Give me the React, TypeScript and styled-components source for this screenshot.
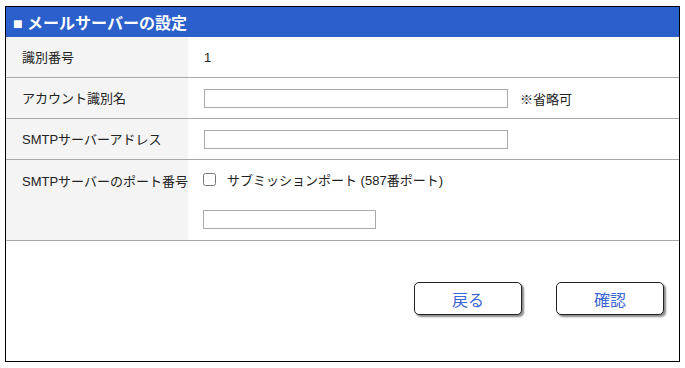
import styled, { createGlobalStyle } from 'styled-components'

const GlobalStyle = createGlobalStyle`
  body {
    margin: 0;
    font-family: "Liberation Sans", "Noto Sans CJK JP", sans-serif;
    color: #222;
    background: #fff;
  }
`

export default function App() {
  return (
    <>
      <GlobalStyle />
      <Panel>
        <Header>■ メールサーバーの設定</Header>
        <Row>
          <Label>識別番号</Label>
          <Value>1</Value>
        </Row>
        <Row>
          <Label>アカウント識別名</Label>
          <Value>
            <TextInput $width={304} />
            <Note>※省略可</Note>
          </Value>
        </Row>
        <Row>
          <Label>SMTPサーバーアドレス</Label>
          <Value>
            <TextInput $width={304} />
          </Value>
        </Row>
        <Row $tall>
          <Label $top>SMTPサーバーのポート番号</Label>
          <PortValue>
            <CheckLine>
              <Check type="checkbox" />
              <span>サブミッションポート (587番ポート)</span>
            </CheckLine>
            <TextInput $width={173} />
          </PortValue>
        </Row>
        <Buttons>
          <Button>戻る</Button>
          <Button>確認</Button>
        </Buttons>
      </Panel>
    </>
  )
}

const Panel = styled.div`
  margin: 6px 0 0 5px;
  width: 675px;
  height: 356px;
  box-sizing: border-box;
  border: 1px solid #000;
  display: flex;
  flex-direction: column;
`

const Header = styled.div`
  height: 30px;
  background: #2b60cc;
  color: #fff;
  font-weight: bold;
  font-size: 16px;
  display: flex;
  align-items: center;
  padding-left: 7px;
`

const Row = styled.div<{ $tall?: boolean }>`
  display: flex;
  height: ${p => (p.$tall ? 80 : 40)}px;
  border-bottom: 1px solid #a8a8a8;
  font-size: 13px;
`

const Label = styled.div<{ $top?: boolean }>`
  width: 182px;
  flex-shrink: 0;
  background: #f4f4f4;
  padding-left: 16px;
  box-sizing: border-box;
  white-space: nowrap;
  display: flex;
  align-items: ${p => (p.$top ? 'flex-start' : 'center')};
  padding-top: ${p => (p.$top ? 11 : 0)}px;
  padding-bottom: ${p => (p.$top ? 0 : 2)}px;
`

const Value = styled.div`
  flex: 1;
  display: flex;
  align-items: center;
  padding-left: 16px;
`

const PortValue = styled.div`
  flex: 1;
  display: flex;
  flex-direction: column;
  padding: 12px 0 0 15px;
  gap: 23px;
`

const CheckLine = styled.label`
  display: flex;
  align-items: center;
  gap: 11px;
  height: 15px;
`

const Check = styled.input`
  margin: 0;
  width: 13px;
  height: 13px;
`

const TextInput = styled.input<{ $width: number }>`
  width: ${p => p.$width}px;
  height: 19px;
  box-sizing: border-box;
  border: 1px solid #a9a9a9;
  margin: 0;
  padding: 0 3px;
`

const Note = styled.span`
  margin-left: 12px;
`

const Buttons = styled.div`
  display: flex;
  justify-content: flex-end;
  gap: 34px;
  padding: 41px 15px 0 0;
`

const Button = styled.button`
  width: 108px;
  height: 33px;
  background: #fff;
  border: 1px solid #222;
  border-radius: 5px;
  box-shadow: 2px 2px 2px #888;
  color: #3b66d4;
  font-family: inherit;
  font-size: 16px;
  cursor: pointer;
`
